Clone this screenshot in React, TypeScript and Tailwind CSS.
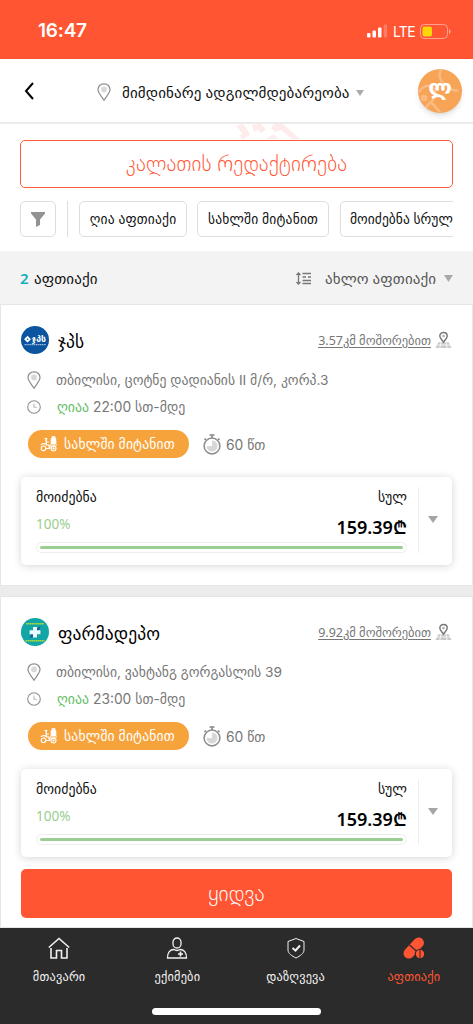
import type { ReactNode } from "react";

const pharmacies = [
  {
    name: "ჯპს",
    distance: "3.57კმ მოშორებით",
    address: "თბილისი, ცოტნე დადიანის II მ/რ, კორპ.3",
    hours: "22:00 სთ-მდე",
    logo: <GpcLogo />,
    size: "h-[282px] shrink-0",
  },
  {
    name: "ფარმადეპო",
    distance: "9.92კმ მოშორებით",
    address: "თბილისი, ვახტანგ გორგასლის 39",
    hours: "23:00 სთ-მდე",
    logo: <DepotLogo />,
    size: "flex-1",
  },
];

function GpcLogo() {
  return (
    <svg viewBox="0 0 28 28" className="size-7 shrink-0">
      <circle cx="14" cy="14" r="14" fill="#0b549f" />
      <path d="M6.5 9.8l1.7 1.7 1.7 1.7-1.7 1.7-1.7 1.7-3.4-3.4z" fill="#fff" />
      <circle cx="6.5" cy="13.2" r="0.8" fill="#0b549f" />
      <text x="10.5" y="15.600" fontSize="8.500" fontWeight="700" fill="#fff" textLength="14.5" lengthAdjust="spacingAndGlyphs">
        ჯპს
      </text>
      <path d="M3.5 18.6h21.5" stroke="#9dbbd9" strokeWidth="1.2" strokeDasharray="1.4 .5" />
    </svg>
  );
}

function DepotLogo() {
  return (
    <svg viewBox="0 0 28 28" className="size-7 shrink-0">
      <circle cx="14" cy="14" r="14" fill="#12a5a6" />
      <path d="M5 5.8h18M4.5 22.7h19" stroke="#a9d93c" strokeWidth="1.6" strokeDasharray="1.7 .3" />
      <path d="M8.5 20l3-6 8-6-3 9z" fill="#24509c" />
      <path d="M12 9h4v3.2h3.4v4H16v3.2h-4v-3.2H8.6v-4H12z" fill="#e9fbff" />
    </svg>
  );
}

function PinIcon({ className }: { className: string }) {
  return (
    <svg viewBox="0 0 14 18" className={className} fill="none">
      <path d="M7 .8C3.4.8 1 3.3 1 6.6c0 3.5 3.6 6.6 6 10.6 2.4-4 6-7.1 6-10.6C13 3.3 10.6.8 7 .8z" stroke="#8b8b8b" strokeWidth="1.2" />
      <circle cx="7" cy="6.4" r="2.9" fill="#d8d8d8" />
    </svg>
  );
}

function Caret({ className }: { className: string }) {
  return (
    <svg viewBox="0 0 10 8" preserveAspectRatio="none" className={className}>
      <path d="M0 0h10L5 8z" fill="currentColor" />
    </svg>
  );
}

function MapPinIcon() {
  return (
    <svg viewBox="0 0 18 18" className="h-[18px] w-[17px]" fill="none">
      <path d="M3.5 11.5h11l3 6H.5z" fill="#c9c9c9" />
      <path d="M0 14.3h18M6.5 11L5 18M11.5 11l1.5 7" stroke="#fff" strokeWidth=".8" />
      <path d="M9 1C6.7 1 5.1 2.6 5.1 4.7c0 2.4 2.3 4 3.9 6.5 1.6-2.5 3.9-4.1 3.9-6.500C12.900 2.600 11.300 1 9 1z" fill="#fff" stroke="#777" strokeWidth="1.5" />
      <circle cx="9" cy="4.7" r="1.300" fill="#aaa" />
    </svg>
  );
}

function ScooterIcon() {
  return (
    <svg viewBox="0 0 18 16" className="h-4 w-[18px]" fill="none" stroke="#fff" strokeWidth="1.1">
      <path d="M4.5 2.5h2.2L6 6.5M5.8 3.5l.8 5.5h2l1 3.5H5.7M1 9c1-1.5 3.5-2 5-.5M6.5 6h2.3" />
      <path d="M11.2 7.5V3.8c0-1.2.6-1.6 1-1.8V.8h2.6V2c.6.3 1 .8 1 1.8v3.7z" fill="#fff" />
      <path d="M9.5 9H17M10 9v3.5M12 10.5h3" />
      <circle cx="3.5" cy="12.3" r="2.3" />
      <circle cx="13.5" cy="12.5" r="2.5" />
      <circle cx="13.5" cy="12.5" r=".6" />
    </svg>
  );
}

function StopwatchIcon() {
  return (
    <svg viewBox="0 0 18 21" className="h-[21px] w-[18px]" fill="none">
      <path d="M6.5 1h5M9 1v3M15 4.5L16.5 6M3 4.5L1.5 6" stroke="#888" strokeWidth="1.6" />
      <circle cx="9" cy="12" r="7.9" stroke="#8b8b8b" strokeWidth="1.5" />
      <path d="M9 12V6.5A5.5 5.5 0 1 1 3.5 12z" fill="#d8d8da" />
    </svg>
  );
}

function StatusBar() {
  return (
    <div className="flex h-[59px] items-center bg-[#ff5533] pr-[22px] pl-[38px] text-white">
      <span className="mt-[3px] font-['Inter'] text-[19px] font-semibold tracking-[-0.2px]">16:47</span>
      <div className="mt-[3px] ml-auto flex items-center">
        <svg viewBox="0 0 20 14" className="h-3.5 w-5" fill="#fff">
          <rect y="9" width="3.5" height="4.5" rx="1" />
          <rect x="5.5" y="6.5" width="3.5" height="7" rx="1" />
          <rect x="11" y="3.5" width="3.5" height="10" rx="1" />
          <rect x="16.8" y=".5" width="3.2" height="13" rx="1" opacity=".25" />
        </svg>
        <span className="ml-[6px] w-[23px] font-['Inter'] text-[14px] tracking-[-0.7px]">LTE</span>
        <svg viewBox="0 0 31 15" className="ml-[4px] h-[15px] w-[31px]">
          <rect x=".5" y=".5" width="27" height="14" rx="4" fill="none" stroke="#fff" strokeOpacity=".45" />
          <rect x="2.5" y="2.5" width="9.5" height="10" rx="2" fill="#ffd60a" />
          <path d="M29 5v5c2-.7 2-4.3 0-5z" fill="#fff" fillOpacity=".5" />
        </svg>
      </div>
    </div>
  );
}

function Header() {
  return (
    <header className="flex h-[65px] items-center border-b-2 border-[#ebebeb] bg-white pr-[11px] pl-6">
      <svg viewBox="0 0 10 18" className="mt-px h-[18px] w-2.5" fill="none" stroke="#000" strokeWidth="2">
        <path d="M9 1L2 9l7 8" />
      </svg>
      <PinIcon className="mt-[3px] ml-[63px] h-[18px] w-3.5" />
      <span className="mt-[3px] ml-[11px] w-[230px] text-[15px] whitespace-nowrap text-[#111] tracking-[0.12px]">
        მიმდინარე ადგილმდებარეობა
      </span>
      <Caret className="mt-[4px] ml-[4px] h-[6px] w-2 text-[#aaa]" />
      <div className="relative ml-auto flex size-11 items-center justify-center overflow-hidden rounded-full bg-[#f7a456] shadow-md">
        <svg viewBox="0 0 44 44" className="absolute inset-0" fill="none" stroke="#f9bb83" strokeWidth="2.5">
          <path d="M23 0c-3 8-1 12 4 15s7 8 13 6M1 23c5-8 13-8 16-1 1 4-1 8-4 11l9 10M13 33l-8 8" />
          <circle cx="6" cy="29" r="2" />
        </svg>
        <span className="relative -mt-2 text-[22px] font-bold text-white">ლ</span>
      </div>
    </header>
  );
}

function FilterChip({ className, children }: { className: string; children: ReactNode }) {
  return (
    <div className={`flex h-9 shrink-0 items-center border border-[#dedede] text-[13.5px] whitespace-nowrap text-[#111] ${className}`}>
      {children}
    </div>
  );
}

function Filters() {
  return (
    <section className="relative h-[127px] bg-white px-5 pt-4">
      {/* faint brand mark behind the header edge */}
      <svg viewBox="0 0 66 16" className="absolute top-0 left-[234px] h-4 w-[66px]" fill="#fdeceb">
        <path d="M2 2l7-2 6 8-5 3zM6 11l8-4 2 4-8 5zM18 1l9-1 5 6-5 3-3-3-4 2zM32 15l8-5 4 5zM40 0h9l17 15h-8L47 6l-6 2-4-4z" />
      </svg>
      <button className="relative flex h-[48px] w-full items-center justify-center rounded-[5px] border-[1.5px] border-[#ff5b3a] bg-white text-[21px] font-extralight tracking-[0.15px] text-[#ff5533]">
        კალათის რედაქტირება
      </button>
      <div className="mt-[13px] flex">
        <FilterChip className="w-9 justify-center rounded-[5px]">
          <svg viewBox="0 0 14 15" className="h-[15px] w-3.5" fill="#929292">
            <path d="M0 0h14v1.5L9 7.5V13l-4 2V7.5L0 1.5z" />
          </svg>
        </FilterChip>
        <div className="mx-[11px] h-9 w-px shrink-0 bg-[#dedede]" />
        <FilterChip className="w-[108px] justify-center rounded-[5px] tracking-[0.2px]">ღია აფთიაქი</FilterChip>
        <FilterChip className="ml-[10px] w-[132px] justify-center rounded-[5px] tracking-[0.2px]">სახლში მიტანით</FilterChip>
        <FilterChip className="ml-[11px] w-[113px] rounded-l-[5px] border-r-0 pl-[9px] tracking-[0.05px]">მოიძებნა სრულ</FilterChip>
      </div>
    </section>
  );
}

function ResultsBar() {
  return (
    <div className="flex h-[53px] items-center bg-[#f3f3f3] px-5 pt-0.5 text-[15px]">
      <span className="w-[14px] font-semibold text-[#14adc0]">2</span>
      <span className="tracking-[0.1px] text-[#111]">აფთიაქი</span>
      <svg viewBox="0 0 16 13" className="ml-auto h-[13px] w-4" fill="none" stroke="#777" strokeWidth="1.3">
        <path d="M2.5 1v11M.5 3l2-2 2 2M.5 10l2 2 2-2M6.5 1.500H15M6.5 5H10M12 5h3M6.5 8.500H15M6.5 11.500H15" />
      </svg>
      <span className="ml-[13px] w-[112px] tracking-[0.1px] whitespace-nowrap text-[#555]">ახლო აფთიაქი</span>
      <Caret className="ml-[7px] h-[7px] w-[9px] text-[#aaa]" />
    </div>
  );
}

function PharmacyCard({ pharmacy }: { pharmacy: (typeof pharmacies)[number] }) {
  return (
    <article className={`border border-[#e6e6e6] bg-white px-5 pt-[21px] ${pharmacy.size}`}>
      <div className="flex h-7 items-center">
        {pharmacy.logo}
        <h2 className="mt-[3px] ml-[9px] text-[17.5px] text-black tracking-[0.1px]">{pharmacy.name}</h2>
        <span className="mt-[3px] ml-auto text-[12.5px] text-[#777] underline underline-offset-2">{pharmacy.distance}</span>
        <span className="ml-1">
          <MapPinIcon />
        </span>
      </div>

      <div className="mt-[16px] flex h-5 items-center font-['Inter','DejaVu_Sans',sans-serif] text-[13.7px] text-[#777]">
        <PinIcon className="ml-[6px] h-[18px] w-3.5" />
        <span className="ml-[15px] whitespace-nowrap">{pharmacy.address}</span>
      </div>
      <div className="mt-[7px] flex h-5 items-center font-['Inter','DejaVu_Sans',sans-serif] text-[13.8px] text-[#777]">
        <svg viewBox="0 0 14 14" className="ml-[6px] size-3.5" fill="none" stroke="#8f8f8f" strokeWidth="1.1">
          <circle cx="7" cy="7" r="6.300" />
          <path d="M7 3.5v3.800h3" stroke="#bbb" />
        </svg>
        <span className="ml-4">
          <span className="mr-1 text-[#65bd65]">ღიაა</span>
          {pharmacy.hours}
        </span>
      </div>

      <div className="mt-[13px] flex h-7 items-center">
        <div className="ml-[7px] flex h-7 w-[161px] items-center rounded-full bg-[#f7a33c] pl-3 text-[13.6px] tracking-[0.2px] text-white">
          <ScooterIcon />
          <span className="ml-[6px] whitespace-nowrap">სახლში მიტანით</span>
        </div>
        <span className="ml-[14px]">
          <StopwatchIcon />
        </span>
        <span className="mt-[3px] ml-[5px] font-['Inter','DejaVu_Sans',sans-serif] text-[13.8px] text-[#777]">60 წთ</span>
      </div>

      <div className="mt-[19px] flex h-[88px] rounded-[5px] bg-white pt-2.5 shadow-[0_1px_8px_rgba(0,0,0,0.17)]">
        <div className="ml-[15px] w-[371px]">
          <div className="flex h-5 items-center justify-between text-[13.8px] text-[#111]">
            <span>მოიძებნა</span>
            <span>სულ</span>
          </div>
          <div className="mt-[7px] flex h-5 items-center justify-between">
            <span className="mt-px text-[13.5px] text-[#98ce8e]">100%</span>
            <span className="mt-[7px] text-[18px] font-semibold text-black">159.39₾</span>
          </div>
          <div className="mt-2 h-[11px] rounded-full border border-[#ededed] px-[3px] py-[3px]">
            <div className="h-[3px] rounded-full bg-[#9bcf91]" />
          </div>
        </div>
        <div className="ml-[11px] h-[66px] w-px bg-[#eee]" />
        <Caret className="mt-[29px] ml-[9px] h-[7px] w-2.5 text-[#a5a5a5]" />
      </div>
    </article>
  );
}

const tabs = [
  {
    label: "მთავარი",
    color: "text-[#f1f1f1]",
    icon: (
      <g fill="none" stroke="currentColor" strokeWidth="1.6">
        <path d="M.8 10.5L11 1.5l10.2 9M3 11v10h5.5v-7.5h5V21H19V11" />
      </g>
    ),
  },
  {
    label: "ექიმები",
    color: "text-[#f1f1f1]",
    icon: (
      <g fill="none" stroke="currentColor" strokeWidth="1.3">
        <rect x="7" y="1" width="8" height="10" rx="4" />
        <path d="M8 12.5c-4 0-6.500 3-6.500 8.500h19c0-5.500-2.500-8.500-6.500-8.500-1.500 1.300-4.500 1.300-6 0z" />
        <path d="M14.5 14.5v5M12 17h5" strokeWidth="1.6" />
      </g>
    ),
  },
  {
    label: "დაზღვევა",
    color: "text-[#f1f1f1]",
    icon: (
      <g fill="none" stroke="currentColor">
        <path d="M11 1.5l8 3V13c0 3.5-4 6-8 8-4-2-8-4.500-8-8V4.5z" />
        <path d="M7.5 11l3 2.5L15 8.500" strokeWidth="2" />
      </g>
    ),
  },
  {
    label: "აფთიაქი",
    color: "text-[#ff5533]",
    icon: (
      <g fill="currentColor">
        <rect x="5.5" y="-1.5" width="10.5" height="25" rx="5.2" transform="rotate(43 10.700 11)" />
        <path d="M6.5 8l8 7" stroke="#2b2b2b" strokeWidth="1.2" />
        <circle cx="17" cy="17" r="5.3" fill="#2b2b2b" />
        <circle cx="17" cy="17" r="4.2" />
        <path d="M17 12.5v9" stroke="#2b2b2b" />
      </g>
    ),
  },
];

function TabBar() {
  return (
    <nav className="flex h-24 shrink-0 flex-col items-center bg-[#2b2b2b]">
      <div className="flex w-full pt-[9px]">
        {tabs.map((tab) => (
          <div key={tab.label} className={`flex flex-1 flex-col items-center ${tab.color}`}>
            <svg viewBox="0 0 22 22" className="size-[22px]">
              {tab.icon}
            </svg>
            <span className="mt-[9px] text-[12.3px] leading-[18px] tracking-[0.2px]">{tab.label}</span>
          </div>
        ))}
      </div>
      <div className="mt-[22px] h-[7px] w-[169px] rounded-full bg-white" />
    </nav>
  );
}

export default function App() {
  return (
    <div className="flex h-[1024px] w-[473px] flex-col overflow-hidden bg-[#ececec] font-['Noto_Sans','DejaVu_Sans',sans-serif]">
      <StatusBar />
      <Header />
      <Filters />
      <ResultsBar />
      <main className="relative flex min-h-0 flex-1 flex-col gap-[10px]">
        {pharmacies.map((pharmacy) => (
          <PharmacyCard key={pharmacy.name} pharmacy={pharmacy} />
        ))}
        <button className="absolute bottom-[10px] left-[21px] flex h-[49px] w-[431px] items-center justify-center rounded-[5px] bg-[#ff5533] text-[21.5px] font-extralight text-white">
          ყიდვა
        </button>
      </main>
      <TabBar />
    </div>
  );
}
